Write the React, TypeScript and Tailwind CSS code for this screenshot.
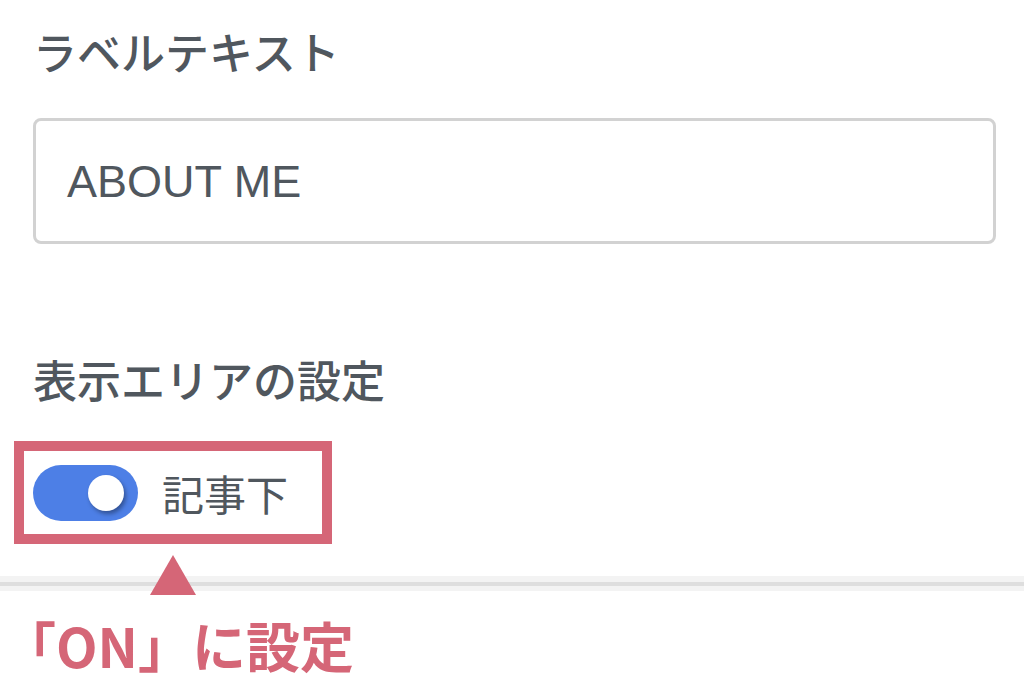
import React from "react";

export default function App() {
  const jp = { fontFamily: '"Noto Sans CJK JP", "Noto Sans", sans-serif' };
  return (
    <div className="w-[1024px] h-[698px] bg-white overflow-hidden relative" style={jp}>
      <div className="pl-[33px] pr-[28px] pt-[29px]">
        <div className="text-[44px] leading-none text-[#50575e] font-medium">ラベルテキスト</div>
        <div className="mt-[45px] h-[126px] border-[3px] border-[#d2d2d2] rounded-[8px] flex items-center pl-[31px]">
          <span
            className="text-[45px] leading-none text-[#50575e]"
            style={{ fontFamily: '"Liberation Sans", Arial, sans-serif' }}
          >
            ABOUT ME
          </span>
        </div>
        <div className="mt-[113px] text-[44px] leading-none text-[#50575e] font-medium">表示エリアの設定</div>
        <div className="relative mt-[64px] flex items-center h-[56px]">
          <div className="w-[105px] h-[56px] rounded-full bg-[#4d7fe6] relative flex items-center justify-end pr-[14px]">
            <div className="w-[36px] h-[36px] rounded-full bg-white shadow-[2px_3px_4px_rgba(0,0,0,0.35)]" />
          </div>
          <span className="ml-[24px] text-[42px] leading-none text-[#50575e]">記事下</span>
          <div className="absolute left-[-19px] top-[-24px] w-[318px] h-[103px] border-[10px] border-[#d56677]" />
        </div>
      </div>
      <div className="mt-[55px] h-[15px] bg-[#f3f3f3] flex flex-col justify-center">
        <div className="h-[4px] bg-[#dedede]" />
      </div>
      <div className="absolute left-[150px] top-[555px] w-0 h-0 border-l-[23px] border-r-[23px] border-b-[40px] border-l-transparent border-r-transparent border-b-[#d56677]" />
      <div className="mt-[27px] pl-[2px] text-[54px] leading-none font-bold text-[#d56677]">「ON」に設定</div>
    </div>
  );
}
